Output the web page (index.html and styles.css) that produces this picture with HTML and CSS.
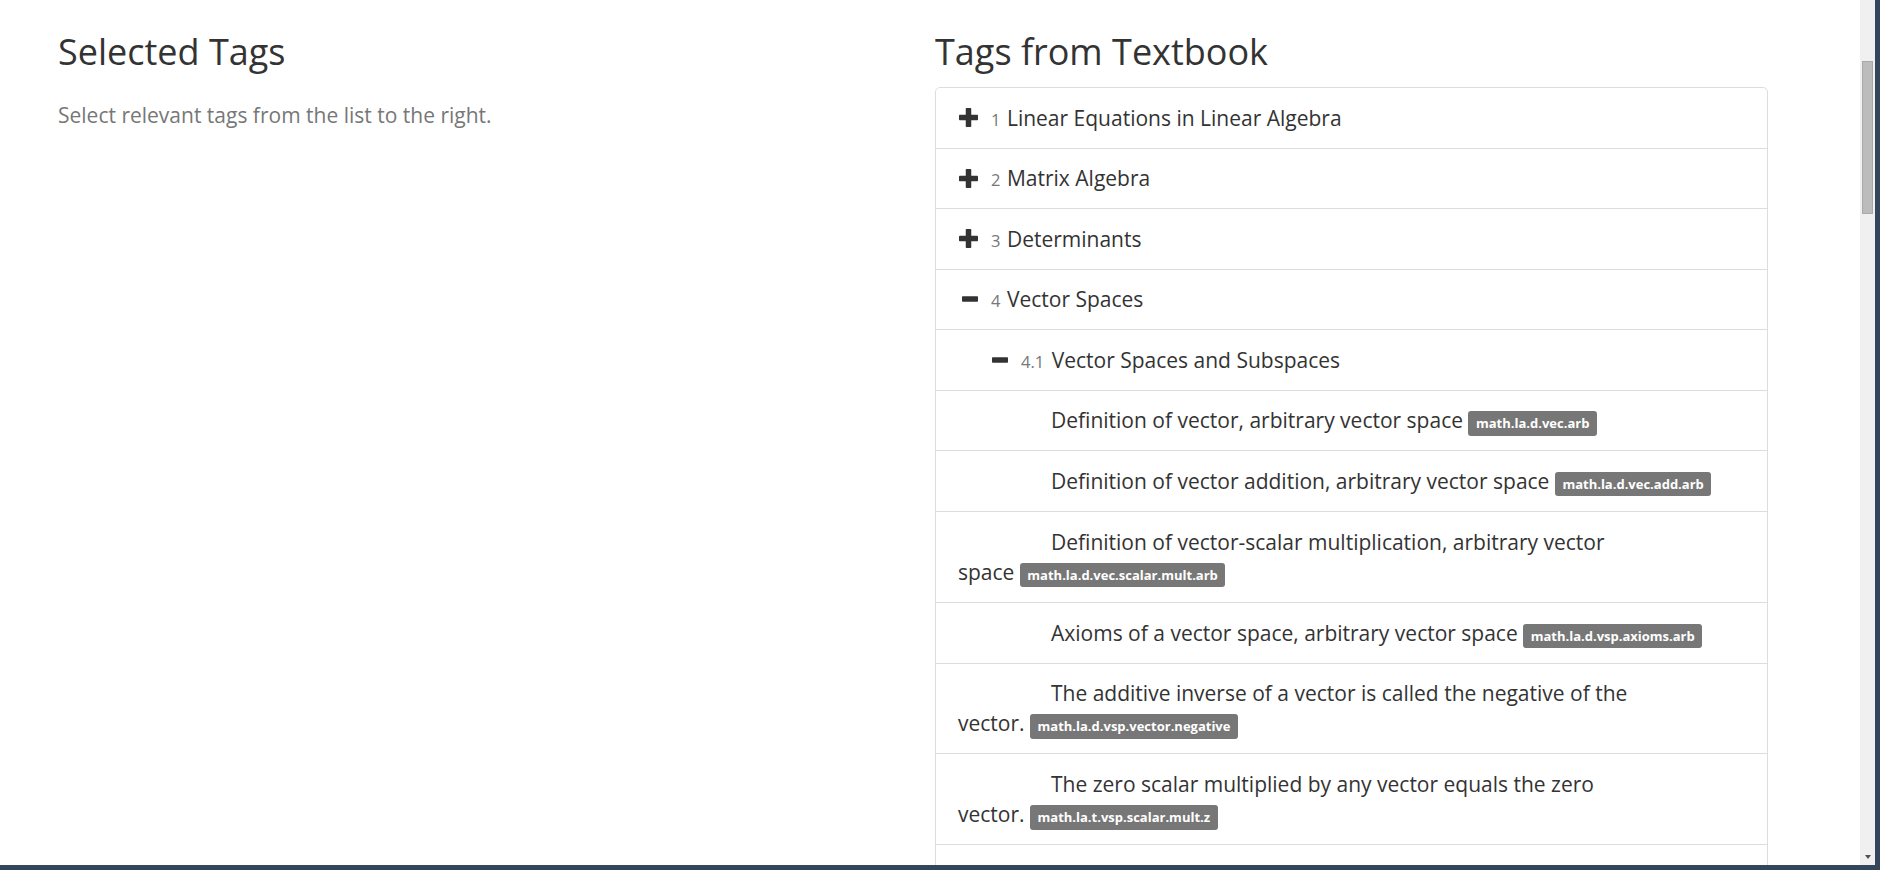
FILE: index.html
```html
<!DOCTYPE html>
<html lang="en">
<head>
<meta charset="utf-8">
<title>Tags</title>
<link rel="stylesheet" href="styles.css">
</head>
<body>
<div class="screen">
  <div class="content">
    <div class="page">
      <section class="col">
        <h2 class="heading">Selected Tags</h2>
        <p class="hint">Select relevant tags from the list to the right.</p>
      </section>
      <section class="col">
        <h2 class="heading">Tags from Textbook</h2>
        <ul class="tree">
          <li class="node"><span class="toggle"><svg class="ico-plus" width="19" height="19" viewBox="0 0 19 19"><rect x="0" y="6.75" width="19" height="5.5" rx="0.8"/><rect x="6.75" y="0" width="5.5" height="19" rx="0.8"/></svg></span><span class="num">1</span><span class="title">Linear Equations in Linear Algebra</span></li>
          <li class="node"><span class="toggle"><svg class="ico-plus" width="19" height="19" viewBox="0 0 19 19"><rect x="0" y="6.75" width="19" height="5.5" rx="0.8"/><rect x="6.75" y="0" width="5.5" height="19" rx="0.8"/></svg></span><span class="num">2</span><span class="title">Matrix Algebra</span></li>
          <li class="node"><span class="toggle"><svg class="ico-plus" width="19" height="19" viewBox="0 0 19 19"><rect x="0" y="6.75" width="19" height="5.5" rx="0.8"/><rect x="6.75" y="0" width="5.5" height="19" rx="0.8"/></svg></span><span class="num">3</span><span class="title">Determinants</span></li>
          <li class="node"><span class="toggle"><svg class="ico-minus" width="16" height="6" viewBox="0 0 16 6"><rect x="0" y="0.25" width="16" height="5.5" rx="0.8"/></svg></span><span class="num">4</span><span class="title">Vector Spaces</span></li>
          <li class="node"><span class="indent"></span><span class="toggle"><svg class="ico-minus" width="16" height="6" viewBox="0 0 16 6"><rect x="0" y="0.25" width="16" height="5.5" rx="0.8"/></svg></span><span class="num num-sub">4.1</span><span class="title">Vector Spaces and Subspaces</span></li>
          <li class="node leaf">Definition of vector, arbitrary vector <span class="keep">space <span class="badge">math.la.d.vec.arb</span></span></li>
          <li class="node leaf">Definition of vector addition, arbitrary vector <span class="keep">space <span class="badge">math.la.d.vec.add.arb</span></span></li>
          <li class="node leaf">Definition of vector-scalar multiplication, arbitrary vector <span class="keep">space <span class="badge">math.la.d.vec.scalar.mult.arb</span></span></li>
          <li class="node leaf">Axioms of a vector space, arbitrary vector <span class="keep">space <span class="badge">math.la.d.vsp.axioms.arb</span></span></li>
          <li class="node leaf">The additive inverse of a vector is called the negative of the <span class="keep">vector. <span class="badge">math.la.d.vsp.vector.negative</span></span></li>
          <li class="node leaf">The zero scalar multiplied by any vector equals the zero <span class="keep">vector. <span class="badge">math.la.t.vsp.scalar.mult.z</span></span></li>
          <li class="node leaf">A scalar multiplied by the zero vector equals the zero <span class="keep">vector. <span class="badge">math.la.t.vsp.zero.mult.z</span></span></li>
        </ul>
      </section>
    </div>
  </div>
  <div class="scrollbar">
    <div class="thumb"></div>
    <div class="arrow-down"></div>
  </div>
</div>
</body>
</html>
```

FILE: styles.css
```css
html, body {
  margin: 0;
  height: 100%;
  overflow: hidden;
  background: #ffffff;
}

body {
  font-family: "Open Sans", "Liberation Sans", sans-serif;
  color: #333333;
}

.screen {
  box-sizing: border-box;
  width: 1880px;
  height: 870px;
  display: flex;
  border-right: 5px solid #34475a;
  border-bottom: 5px solid #34475a;
}

.content {
  flex: 1;
  overflow: hidden;
}

.scrollbar {
  width: 15px;
  flex: none;
  background: #f0f0f0;
  display: flex;
  flex-direction: column;
  align-items: center;
}

.thumb {
  margin-top: 61px;
  width: 9px;
  height: 151px;
  background: #bcbcbc;
  border: 1px solid #a9a9a9;
}

.arrow-down {
  margin-top: auto;
  margin-bottom: 6px;
  width: 0;
  height: 0;
  border-left: 3.5px solid transparent;
  border-right: 3.5px solid transparent;
  border-top: 4px solid #505050;
}

.page {
  display: grid;
  grid-template-columns: 833px 833px;
  column-gap: 44px;
  padding: 32px 0 0 58px;
}

.heading {
  margin: 0 0 15px;
  font-size: 36px;
  line-height: 40px;
  font-weight: 400;
  color: #333333;
}

.hint {
  margin: 28px 0 0;
  font-size: 21px;
  line-height: 30px;
  color: #777777;
}

.tree {
  list-style: none;
  margin: 0;
  padding: 0;
  border: 1px solid #dddddd;
  border-radius: 5px;
}

.node {
  padding: 14.75px 22px;
  font-size: 21px;
  line-height: 30px;
  color: #333333;
  border-top: 1px solid #dddddd;
}

.node:first-child {
  border-top: none;
}

.indent {
  display: inline-block;
  width: 30px;
  height: 30px;
  vertical-align: top;
}

.toggle {
  display: inline-flex;
  align-items: center;
  justify-content: flex-end;
  width: 20px;
  height: 30px;
  margin-right: 13px;
  vertical-align: top;
}

.toggle svg {
  fill: #333333;
  display: block;
}

.num {
  font-size: 16.5px;
  line-height: 1;
  color: #777777;
  margin-right: 6.5px;
}

.num-sub {
  margin-right: 7.5px;
}

.leaf {
  text-indent: 93px;
}

.keep {
  white-space: nowrap;
}

.badge {
  display: inline-block;
  text-indent: 0;
  padding: 6px 7.5px 5.3px;
  font-size: 13px;
  line-height: 13px;
  font-weight: 700;
  color: #ffffff;
  background: #777777;
  border-radius: 3px;
}
```
